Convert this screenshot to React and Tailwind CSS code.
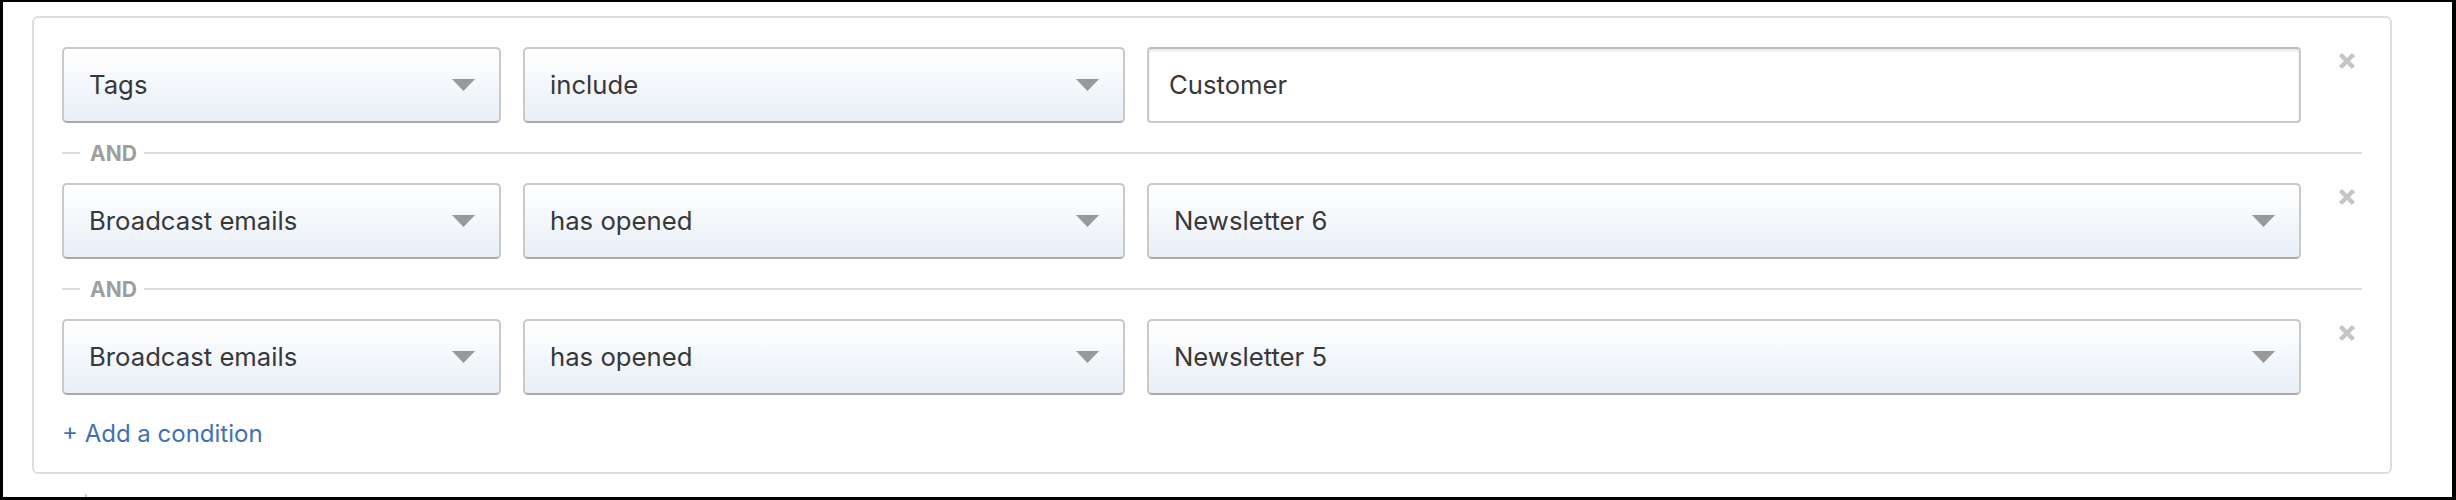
const conditions = [
    { field: "Tags", op: "include", value: "Customer", input: true },
    { field: "Broadcast emails", op: "has opened", value: "Newsletter 6" },
    { field: "Broadcast emails", op: "has opened", value: "Newsletter 5" },
];

const font = { fontFamily: "Inter, 'Liberation Sans', sans-serif" };

const Caret = () => (
    <svg width="23" height="12" viewBox="0 0 23 12" className="shrink-0">
        <path d="M0 0 L23 0 L11.5 12 Z" fill="#999999" />
    </svg>
);

const Select = ({ label, className }) => (
    <div
        className={
            "h-full flex items-center justify-between pl-[25px] pr-[24px] rounded-[5px] border-2 border-[#c9c9c9] border-b-[#a9a9a9] bg-gradient-to-b from-white to-[#e8eff7] text-[25.7px] text-[#383838] " +
            className
        }
    >
        <span>{label}</span>
        <Caret />
    </div>
);

const Divider = () => (
    <div className="h-[60px] flex items-center">
        <div className="w-[18px] h-[2px] bg-[#dddddd]"></div>
        <span className="ml-[10px] mr-[7px] text-[21px] font-bold text-[#9e9e9e] leading-none">AND</span>
        <div className="flex-1 h-[2px] bg-[#dddddd]"></div>
    </div>
);

export default function App() {
    return (
        <div
            style={font}
            className="w-[2456px] h-[500px] overflow-hidden bg-white border-l-[3px] border-t-[2px] border-r-[4px] border-b-[3px] border-black pl-[29px] pt-[14px]"
        >
            <div className="w-[2360px] border-2 border-[#dddddd] rounded-[6px] pl-[28px] pr-[28px] pt-[29px] pb-[23px]">
                {conditions.map((c, i) => (
                    <div key={i}>
                        {i > 0 && <Divider />}
                        <div className="h-[76px] flex">
                            <Select label={c.field} className="w-[439px]" />
                            <Select label={c.op} className="w-[602px] ml-[22px]" />
                            {c.input ? (
                                <div className="ml-[22px] w-[1154px] h-full flex items-center pl-[20px] rounded-[4px] border-2 border-[#c9c9c9] border-t-[#bdbdbd] bg-white shadow-[inset_0_2px_3px_rgba(0,0,0,0.1)] text-[25.7px] text-[#383838]">
                                    Customer
                                </div>
                            ) : (
                                <Select label={c.value} className="w-[1154px] ml-[22px]" />
                            )}
                            <div className="flex-1 flex justify-end pr-[6px] pt-[5px]">
                                <svg width="18" height="18" viewBox="0 0 18 18">
                                    <path d="M2.5 2.5 L15.5 15.5 M15.5 2.5 L2.5 15.5" stroke="#c6c6c6" strokeWidth="4.5" />
                                </svg>
                            </div>
                        </div>
                    </div>
                ))}
                <div className="mt-[24px] h-[30px] flex items-center text-[24px] text-[#3f71b3]">
                    + Add a condition
                </div>
            </div>
            <div className="ml-[53px] mt-[20px] w-[2px] h-[4px] bg-[#d0d0d0]"></div>
        </div>
    );
}
